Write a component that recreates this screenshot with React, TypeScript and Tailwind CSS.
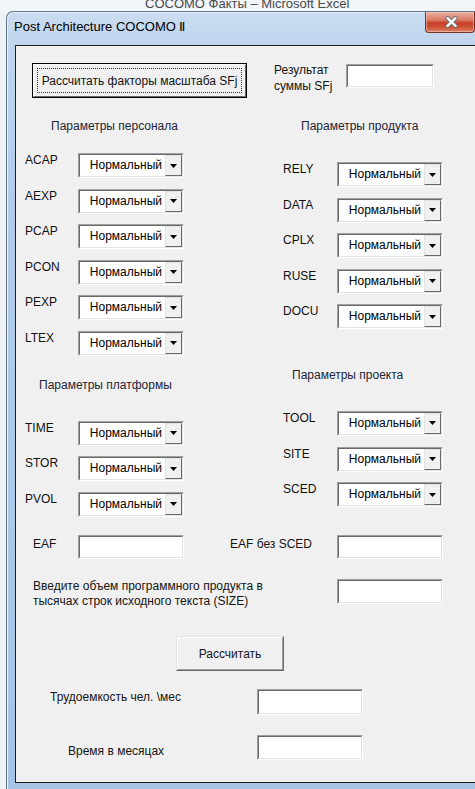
import type { ReactNode } from "react";

// Classic Win32 sunken frame used by edit boxes and combo boxes
function Sunken({ className, children }: { className: string; children?: ReactNode }) {
  return (
    <div
      className={`shrink-0 border border-t-[#a0a0a0] border-l-[#a0a0a0] border-r-white border-b-white ${className}`}
    >
      <div className="flex h-full w-full border border-t-[#696969] border-l-[#696969] border-r-[#e3e3e3] border-b-[#e3e3e3] bg-white">
        {children}
      </div>
    </div>
  );
}

function Combo() {
  return (
    <Sunken className="h-[25px] w-[106px]">
      <span className="flex-1 whitespace-nowrap pr-[3px] text-right text-[12px] leading-[21px] text-black">
        Нормальный
      </span>
      <span className="flex w-[17px] items-center justify-center border border-t-[#e3e3e3] border-l-[#e3e3e3] border-r-[#696969] border-b-[#696969] bg-[#f0f0f0]">
        <svg width="7" height="4" viewBox="0 0 7 4">
          <path d="M0 0h7L3.5 4z" fill="#000" />
        </svg>
      </span>
    </Sunken>
  );
}

function ParamRow({ code, labelWidth }: { code: string; labelWidth: string }) {
  return (
    <div className="flex h-[35.6px] items-start">
      <span className={`${labelWidth} shrink-0 text-[12px] leading-[14px] text-[#111]`}>{code}</span>
      <Combo />
    </div>
  );
}

function CloseButton() {
  return (
    <div className="mr-[6px] flex h-[21px] w-[50px] items-center justify-center rounded-b-[4px] border border-t-0 border-[#7b3326] bg-[linear-gradient(180deg,#eab0a2_0%,#dc7a63_40%,#c53d24_55%,#cf5a3d_80%,#e0866a_100%)] pl-[3px] shadow-[inset_0_0_0_1px_rgba(255,220,210,0.45)]">
      <svg width="15" height="12" viewBox="0 0 15 12">
        <path d="M3.5 2.2l8 7.6M11.5 2.2l-8 7.6" stroke="#6e6e6e" strokeWidth="4.4" strokeLinecap="round" />
        <path d="M3.5 2.2l8 7.6M11.5 2.2l-8 7.6" stroke="#fff" strokeWidth="2.4" strokeLinecap="round" />
      </svg>
    </div>
  );
}

const left = ["ACAP", "AEXP", "PCAP", "PCON", "PEXP", "LTEX"];
const product = ["RELY", "DATA", "CPLX", "RUSE", "DOCU"];
const platform = ["TIME", "STOR", "PVOL"];
const project = ["TOOL", "SITE", "SCED"];

export default function App() {
  return (
    <div className="relative h-[789px] w-[475px] overflow-hidden bg-[#eef2f7] font-['Liberation_Sans',Arial,sans-serif]">
      {/* excel caption peeking above the dialog */}
      <div className="h-[11px] overflow-hidden bg-[#f2f5f9]">
        <div className="-mt-[3px] whitespace-nowrap pl-[145px] text-[13px] leading-[14px] text-[#4a4a4a]">
          COCOMO Факты – Microsoft Excel
        </div>
      </div>

      {/* dialog window */}
      <div className="ml-[6px] flex h-[778px] w-[475px] flex-col rounded-tl-[7px] border-l border-t border-[#5f7389] bg-[linear-gradient(180deg,#cadcf0_0px,#bfd5ee_33px,#b2cbea_200px,#a6c3e5_100%)] shadow-[inset_1px_1px_0_#e4eef9]">
        <div className="flex h-[33px] shrink-0 items-start justify-between">
          <span className="whitespace-nowrap pl-[7px] pt-[7px] text-[13px] leading-[16px] text-black">
            Post Architecture COCOMO Ⅱ
          </span>
          <CloseButton />
        </div>

        {/* client area */}
        <div className="ml-[8px] h-[738px] shrink-0 border-y border-l border-[#1e1e1e] bg-[#f0f0f0] text-[12px] leading-[14px] text-[#141414]">
          <div className="flex items-start pl-[16px] pt-[17px]">
            <div className="h-[35px] w-[215px] shrink-0 border border-black bg-[#f0f0f0]">
              <div className="h-full w-full border border-t-white border-l-white border-r-[#696969] border-b-[#696969] p-[3px]">
                <div className="flex h-full items-center justify-center whitespace-nowrap border border-dotted border-[#333]">
                  Рассчитать факторы масштаба SFj
                </div>
              </div>
            </div>
            <div className="ml-[27px] w-[72px] shrink-0 leading-[15.5px]">
              Результат
              <br />
              суммы SFj
            </div>
            <Sunken className="mt-[1px] h-[24px] w-[88px]" />
          </div>

          <div className="mt-[21px] flex">
            <div className="w-[267px] shrink-0 pl-[9px]">
              <div className="pl-[26px] text-[#1d2536]">Параметры персонала</div>
              <div className="mt-[20px]">
                {left.map((c) => (
                  <ParamRow key={c} code={c} labelWidth="w-[53px]" />
                ))}
              </div>
              <div className="mt-[11px] pl-[14px] text-[#1d2536]">Параметры платформы</div>
              <div className="mt-[29px]">
                {platform.map((c) => (
                  <ParamRow key={c} code={c} labelWidth="w-[53px]" />
                ))}
              </div>
            </div>
            <div className="flex-1">
              <div className="pl-[18px] text-[#1d2536]">Параметры продукта</div>
              <div className="mt-[29px]">
                {product.map((c) => (
                  <ParamRow key={c} code={c} labelWidth="w-[54px]" />
                ))}
              </div>
              <div className="mt-[28px] pl-[9px] text-[#1d2536]">Параметры проекта</div>
              <div className="mt-[29px]">
                {project.map((c) => (
                  <ParamRow key={c} code={c} labelWidth="w-[54px]" />
                ))}
              </div>
            </div>
          </div>

          <div className="mt-[8px] flex items-start pl-[17px]">
            <span className="w-[45px] shrink-0 pt-[2px]">EAF</span>
            <Sunken className="h-[24px] w-[106px]" />
            <span className="ml-[46px] w-[107px] shrink-0 whitespace-nowrap pt-[2px]">EAF без SCED</span>
            <Sunken className="h-[24px] w-[106px]" />
          </div>

          <div className="mt-[20px] flex items-start pl-[17px]">
            <span className="w-[304px] shrink-0 leading-[14.4px]">
              Введите объем программного продукта в
              <br />
              тысячах строк исходного текста (SIZE)
            </span>
            <Sunken className="h-[25px] w-[106px]" />
          </div>

          <div className="mt-[28px] pl-[160px]">
            <div className="h-[35px] w-[108px] border border-t-[#e3e3e3] border-l-[#e3e3e3] border-r-[#696969] border-b-[#696969] bg-[#f0f0f0]">
              <div className="flex h-full w-full items-center justify-center border border-t-white border-l-white border-r-[#a0a0a0] border-b-[#a0a0a0]">
                Рассчитать
              </div>
            </div>
          </div>

          <div className="mt-[18px] flex items-start pl-[34px]">
            <span className="w-[207px] shrink-0 pt-[1px]">Трудоемкость чел. \мес</span>
            <Sunken className="h-[26px] w-[106px]" />
          </div>

          <div className="mt-[20px] flex items-start pl-[52px]">
            <span className="w-[189px] shrink-0 pt-[9px]">Время в месяцах</span>
            <Sunken className="h-[25px] w-[106px]" />
          </div>
        </div>
      </div>
    </div>
  );
}
